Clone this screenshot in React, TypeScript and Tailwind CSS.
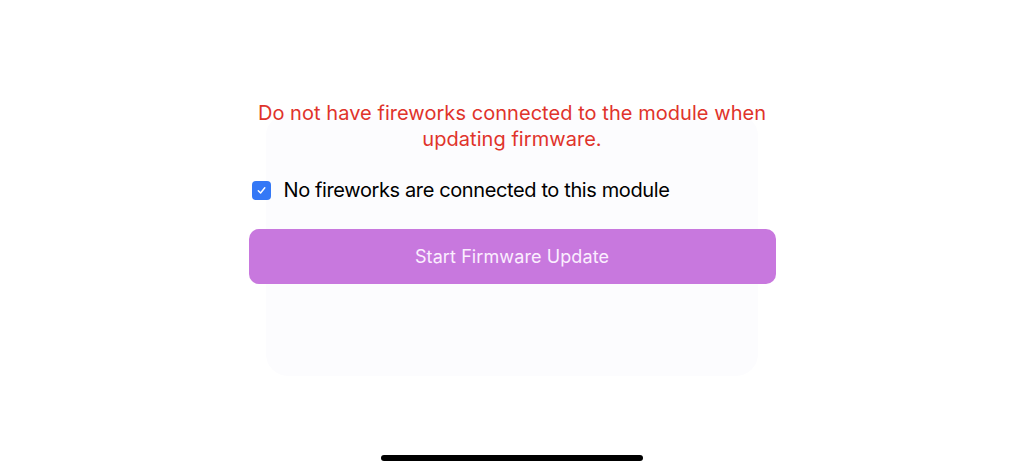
import { useState } from 'react';

export default function App() {
  const [confirmed, setConfirmed] = useState(true);

  return (
    <div
      className="relative w-[1024px] h-[472px] bg-white overflow-hidden"
      style={{ fontFamily: 'Inter, "Noto Sans", sans-serif' }}
    >
      {/* Faded sheet underneath */}
      <div className="absolute left-[266px] top-[114px] w-[492px] h-[262px] rounded-[22px] bg-[#fcfcfe]" />

      <div className="relative flex flex-col items-center pt-[100px]">
        <div className="w-[527px] flex flex-col">
          <p className="text-center text-[20px] leading-[26px] text-[#e0332b] tracking-[0.05px]">
            Do not have fireworks connected to the module when updating firmware.
          </p>

          <label className="mt-[25px] flex items-center gap-[13px] pl-[3px] cursor-pointer">
            <button
              onClick={() => setConfirmed(!confirmed)}
              className={`w-[19px] h-[19px] rounded-[4px] flex items-center justify-center ${
                confirmed ? 'bg-[#3478f6]' : 'border border-gray-400 bg-white'
              }`}
            >
              {confirmed && (
                <svg width="11" height="11" viewBox="0 0 12 12" fill="none">
                  <path d="M2.5 6.3 L5 8.8 L9.6 3" stroke="white" strokeWidth="1.6" strokeLinecap="round" strokeLinejoin="round" />
                </svg>
              )}
            </button>
            <span className="text-[20px] leading-[26px] text-black tracking-[-0.38px]">
              No fireworks are connected to this module
            </span>
          </label>

          <button className="mt-[26px] h-[55px] w-full rounded-[10px] bg-[#c878de] text-[18px] text-[#fbeefe] tracking-[0.1px]">
            Start Firmware Update
          </button>
        </div>
      </div>

      {/* Home indicator */}
      <div className="absolute left-[381px] top-[455px] w-[262px] h-[6px] rounded-full bg-black" />
    </div>
  );
}
